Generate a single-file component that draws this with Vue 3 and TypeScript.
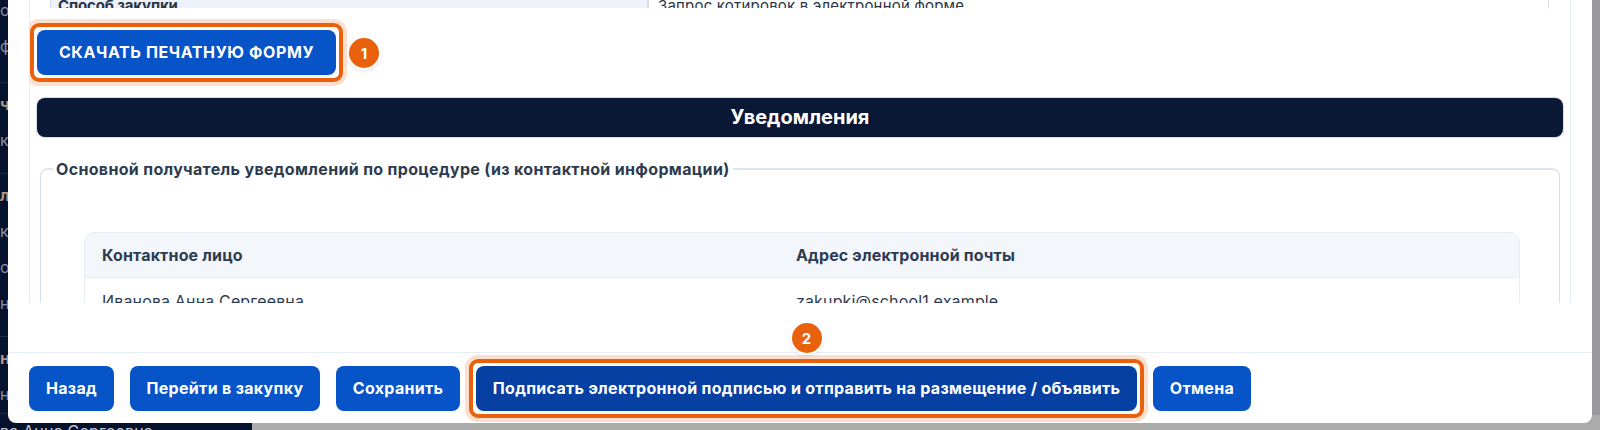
<script setup lang="ts">
interface Row { text: string; head?: boolean }
interface Group { cls: string; rows: Row[] }

const groups: Group[] = [
  { cls: 'g-first', rows: [{ text: 'оз' }, { text: 'ф' }] },
  { cls: '', rows: [{ text: 'ч', head: true }, { text: 'ка' }] },
  { cls: '', rows: [{ text: 'л', head: true }, { text: 'ка' }, { text: 'ос' }, { text: 'н' }] },
  { cls: 'g-last', rows: [{ text: 'н', head: true }, { text: 'не' }] },
]
const footerLeft = ['Назад', 'Перейти в закупку', 'Сохранить']
</script>

<template>
  <div class="page">
    <aside class="side">
      <div v-for="(g, i) in groups" :key="i" class="group" :class="g.cls">
        <div v-for="(r, j) in g.rows" :key="j" class="side-row" :class="{ head: r.head }">{{ r.text }}</div>
      </div>
      <div class="side-user">ва Анна Сергеевна</div>
    </aside>
    <div class="backdrop">
      <div class="backdrop-top"></div>
      <div class="backdrop-bottom"></div>
    </div>

    <section class="modal">
      <div class="body">
        <div class="clip">
          <div class="info-row">
            <div class="info-label">Способ закупки</div>
            <div class="info-value">Запрос котировок в электронной форме</div>
          </div>
        </div>
        <div class="print-row">
          <button class="btn btn-upper marked">СКАЧАТЬ ПЕЧАТНУЮ ФОРМУ</button>
          <span class="badge badge-side">1</span>
        </div>
        <h2 class="bar">Уведомления</h2>
        <fieldset class="set">
          <legend>Основной получатель уведомлений по процедуре (из контактной информации)</legend>
          <div class="table">
            <div class="tr th">
              <div>Контактное лицо</div>
              <div>Адрес электронной почты</div>
            </div>
            <div class="tr td">
              <div>Иванова Анна Сергеевна</div>
              <div>zakupki@school1.example</div>
            </div>
          </div>
        </fieldset>
      </div>
      <div class="spacer"></div>
      <footer class="foot">
        <button v-for="b in footerLeft" :key="b" class="btn">{{ b }}</button>
        <div class="sign-wrap">
          <button class="btn btn-dark marked">Подписать электронной подписью и отправить на размещение / объявить</button>
          <span class="badge badge-over">2</span>
        </div>
        <button class="btn">Отмена</button>
      </footer>
    </section>
  </div>
</template>

<style>
html, body { margin: 0; padding: 0; }
</style>

<style scoped>
.page {
  position: relative;
  display: flex;
  width: 1600px;
  height: 430px;
  overflow: hidden;
  font-family: Inter, "Noto Sans", sans-serif;
}
.side {
  width: 252px;
  flex: none;
  height: 430px;
  overflow: hidden;
  background: #07122e;
  padding-top: 1px;
  box-sizing: border-box;
}
.group {
  padding: 3px 0 15px;
  border-bottom: 1px solid #1e2a45;
  color: #8d93a2;
  font-size: 16px;
}
.g-first { margin-top: -12px; padding-bottom: 18px; }
.g-last { padding-bottom: 1px; }
.side-row {
  height: 36px;
  line-height: 36px;
  overflow: hidden;
}
.head { color: #b9947c; font-weight: 700; }
.side-user {
  padding-top: 7px;
  font-size: 16px;
  letter-spacing: 0.2px;
  line-height: 20px;
  color: #c4c8d2;
  white-space: nowrap;
}
.backdrop { flex: 1; display: flex; flex-direction: column; }
.backdrop-top { height: 415px; background: #9a9a9e; }
.backdrop-bottom { flex: 1; background: #ababab; }

.modal {
  position: absolute;
  left: 8px;
  top: 0;
  width: 1584px;
  height: 423px;
  display: flex;
  flex-direction: column;
  background: #fff;
  border-radius: 0 0 8px 8px;
}
.body {
  height: 303px;
  flex: none;
  margin: 0 21px;
  overflow: hidden;
  border-left: 1px solid #e2e9f3;
  border-right: 1px solid #e2e9f3;
  padding: 0 7px;
}
.clip { height: 8px; overflow: hidden; margin-left: 13px; margin-right: 14px; }
.info-row {
  display: grid;
  grid-template-columns: 597px 1fr;
  margin-top: -5px;
  font-size: 15px;
  line-height: 22px;
  color: #2b3445;
}
.info-label { background: #eef3fb; padding-left: 7px; font-weight: 700; border-left: 1px solid #d5dde8; letter-spacing: -0.15px; }
.info-value { border-left: 2px solid #d5dde8; padding-left: 9px; border-right: 1px solid #d5dde8; letter-spacing: 0.2px; }
.print-row {
  display: flex;
  align-items: center;
  gap: 13px;
  margin-top: 22px;
}
.btn {
  height: 45px;
  padding: 0 17px 2px;
  border: 0;
  border-radius: 8px;
  background: #0753c8;
  color: #fff;
  font: 700 16px/1 Inter, "Noto Sans", sans-serif;
  letter-spacing: 0.3px;
  white-space: nowrap;
}
.btn-upper { width: 299px; padding: 0 0 2px; letter-spacing: 0.6px; }
.btn-dark { background: #0640a3; }
.marked { position: relative; }
.marked::after {
  content: "";
  position: absolute;
  inset: -7px;
  border: 4px solid #e9610d;
  border-radius: 9px;
  box-shadow: 0 0 0 4px #fbdfcf;
  pointer-events: none;
}
.badge {
  width: 30px;
  height: 30px;
  border-radius: 50%;
  background: #e9610d;
  color: #fff;
  font-size: 15px;
  font-weight: 700;
  display: flex;
  align-items: center;
  justify-content: center;
  box-shadow: 0 0 0 2px #fff, 0 2px 5px rgba(10, 24, 54, 0.18);
}
.badge-side { margin-top: 1px; }
.sign-wrap { position: relative; display: flex; }
.badge-over {
  position: absolute;
  left: 50%;
  top: -43px;
  margin-left: -15px;
}
.bar {
  margin: 23px 0 0;
  height: 39px;
  border-radius: 8px;
  background: #0a1836;
  color: #fff;
  font-size: 20px;
  font-weight: 700;
  line-height: 39px;
  text-align: center;
  box-shadow: 0 0 0 1px #d9dee8;
}
.set {
  margin: 22px 3px 0 3px;
  padding: 0 39px 0 43px;
  min-width: 0;
  border: 1px solid #d4dfec;
  border-top: 2px solid #dde5ef;
  border-radius: 8px;
}
legend {
  margin-left: -31px;
  padding: 0 3px;
  font-size: 16px;
  letter-spacing: 0.33px;
  font-weight: 700;
  line-height: 20px;
  color: #2d3b50;
}
.table {
  margin-top: 53px;
  border: 1px solid #e6edf5;
  border-radius: 10px;
  overflow: hidden;
}
.tr {
  display: grid;
  grid-template-columns: 694px 1fr;
  padding: 0 17px;
  font-size: 16px;
  letter-spacing: 0.15px;
  color: #2d3b50;
}
.th {
  height: 44px;
  line-height: 44px;
  background: #f3f6fa;
  font-weight: 700;
  border-bottom: 1px solid #e6edf5;
}
.td { height: 46px; line-height: 46px; }
.spacer { height: 49px; flex: none; }
.foot {
  border-top: 1px solid #e6edf5;
  padding: 13px 21px 0;
  display: flex;
  gap: 15.5px;
}
</style>
